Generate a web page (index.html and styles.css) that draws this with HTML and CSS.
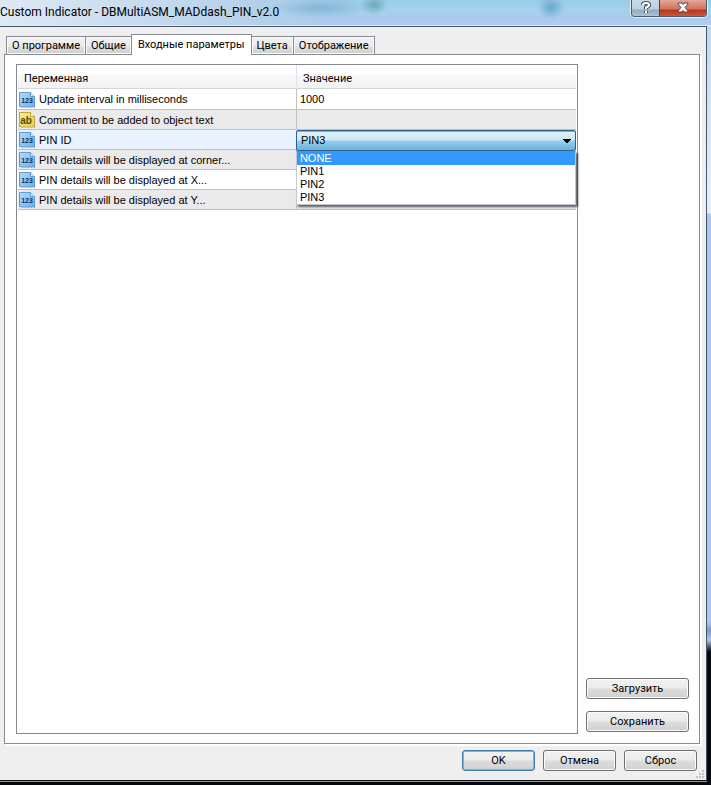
FILE: index.html
```html
<!DOCTYPE html>
<html lang="ru">
<head>
<meta charset="utf-8">
<title>Custom Indicator - DBMultiASM_MADdash_PIN_v2.0</title>
<link rel="stylesheet" href="styles.css">
</head>
<body>
<svg class="defs" aria-hidden="true">
  <defs>
    <linearGradient id="blue" x1="0" y1="0" x2="1" y2="1"><stop offset="0" stop-color="#b4d9f9"/><stop offset="1" stop-color="#6aaee8"/></linearGradient>
    <linearGradient id="gold" x1="0" y1="0" x2="1" y2="1"><stop offset="0" stop-color="#f6ec9c"/><stop offset="1" stop-color="#e2ce55"/></linearGradient>
    <symbol id="number" viewBox="0 0 16 16">
      <path d="M.5.5h11l4 4v11l-1.500-1-1.500 1-1.500-1-1.500 1-1.500-1-1.500 1-1.500-1-1.500 1-1.500-1-1.500 0z" fill="url(#blue)" stroke="#5f9bd0"/>
      <path d="M11.500.5v4h4" fill="#d8ecfc" stroke="#5f9bd0"/>
      <text class="glyph" x="8" y="11" fill="#0c3560" text-anchor="middle">123</text>
    </symbol>
    <symbol id="string" viewBox="0 0 16 16">
      <path d="M.5.5h11l4 4v11l-1.500-1-1.500 1-1.500-1-1.500 1-1.500-1-1.500 1-1.500-1-1.500 1-1.500-1-1.500 0z" fill="url(#gold)" stroke="#bda93a"/>
      <path d="M11.500.5v4h4" fill="#fbf6c8" stroke="#bda93a"/>
      <text class="glyph glyph-ab" x="7" y="12" fill="#5b4a05" text-anchor="middle">ab</text>
    </symbol>
  </defs>
</svg>
<div class="frame">
  <header class="titlebar">
    <h1>Custom Indicator - DBMultiASM_MADdash_PIN_v2.0</h1>
    <div class="caption">
      <button class="help" type="button" aria-label="Справка"><svg width="10" height="13" viewBox="0 0 10 13"><path d="M2 4V3.500Q2 2 5 2T8 4Q8 5.500 5 6.500V8.500M5 10v2" fill="none" stroke="#46505c" stroke-width="4"/><path d="M2 4V3.500Q2 2 5 2T8 4Q8 5.500 5 6.500V8.500M5 10v2" fill="none" stroke="#fff" stroke-width="2"/></svg></button>
      <button class="close" type="button" aria-label="Закрыть"><svg width="12" height="11" viewBox="0 0 12 11"><path d="M1 1h4l1 1.500 1-1.500h4v1L8 5.500l3 3.500v1H7L6 8.500 5 10H1V9l3-3.500L1 2z" fill="#fff" stroke="#57444c"/></svg></button>
    </div>
  </header>
  <main class="dialog">
    <nav class="tabs" role="tablist">
      <button role="tab" type="button">О программе</button>
      <button role="tab" type="button">Общие</button>
      <button role="tab" type="button" class="active" aria-selected="true">Входные параметры</button>
      <button role="tab" type="button">Цвета</button>
      <button role="tab" type="button">Отображение</button>
    </nav>
    <section class="panel" role="tabpanel">
      <div class="list">
        <table>
          <thead><tr><th>Переменная</th><th>Значение</th></tr></thead>
          <tbody>
            <tr><td><div class="name"><svg class="icon"><use href="#number"/></svg>Update interval in milliseconds</div></td><td>1000</td></tr>
            <tr><td><div class="name"><svg class="icon"><use href="#string"/></svg>Comment to be added to object text</div></td><td></td></tr>
            <tr class="selected"><td><div class="name"><svg class="icon"><use href="#number"/></svg><label for="pin">PIN ID</label></div></td>
              <td class="editing">
                <select id="pin"><option>NONE</option><option>PIN1</option><option>PIN2</option><option selected>PIN3</option></select>
                <ul class="options" role="listbox" aria-label="PIN ID">
                  <li role="option" class="hover">NONE</li><li role="option">PIN1</li><li role="option">PIN2</li><li role="option" aria-selected="true">PIN3</li>
                </ul>
              </td></tr>
            <tr><td><div class="name"><svg class="icon"><use href="#number"/></svg>PIN details will be displayed at corner...</div></td><td></td></tr>
            <tr><td><div class="name"><svg class="icon"><use href="#number"/></svg>PIN details will be displayed at X...</div></td><td></td></tr>
            <tr><td><div class="name"><svg class="icon"><use href="#number"/></svg>PIN details will be displayed at Y...</div></td><td></td></tr>
          </tbody>
        </table>
      </div>
      <div class="side">
        <button class="btn" type="button">Загрузить</button>
        <button class="btn" type="button">Сохранить</button>
      </div>
    </section>
    <footer class="actions">
      <button class="btn default" type="button">OK</button>
      <button class="btn" type="button">Отмена</button>
      <button class="btn" type="button">Сброс</button>
      <svg class="grip" width="8" height="8" viewBox="0 0 8 8"><path d="M6 0h2v2H6zM3 3h2v2H3zM6 3h2v2H6zM0 6h2v2H0zM3 6h2v2H3zM6 6h2v2H6z" fill="#c4c4c4"/></svg>
    </footer>
  </main>
</div>
</body>
</html>
```

FILE: styles.css
```css
* { box-sizing: border-box; }
body {
  margin: 0;
  font: 11px/13px "Liberation Sans", Arial, sans-serif;
  color: #000;
}
button, select { font: inherit; color: inherit; margin: 0; padding: 0; }
.defs { position: absolute; width: 0; height: 0; }
.glyph { font: bold 7px "Liberation Sans", Arial, sans-serif; }
.glyph-ab { font-size: 10px; }

.frame {
  display: flex;
  flex-direction: column;
  min-height: 100vh;
  padding: 0 4px 4px 0;
  background:
    linear-gradient(#8f9499, #8f9499) 0 calc(100% - 3px) / calc(100% - 4px) 1px no-repeat,
    linear-gradient(#b9d5ee 0, #e2eefa 190px, #e2eefa 213px, #a9caf0 214px, #a9caf0 622px, #7d9ab8 630px, #a5c8ee 640px, #05080f 652px, #05080f 100%);
}
.titlebar {
  display: flex;
  justify-content: space-between;
  align-items: flex-start;
  height: 26px;
  margin-right: -4px;
  padding-right: 4px;
  border-bottom: 1px solid #dcebfa;
  background:
    radial-gradient(ellipse 14px 10px at 374px 5px, #6da9b9, transparent),
    radial-gradient(ellipse 14px 12px at 551px 7px, #69a8cd, transparent),
    radial-gradient(ellipse 50px 10px at 320px 8px, #85b5d6, transparent),
    linear-gradient(90deg, #dfe9f4 0, #cddff0 100px, #b4d0e9 260px, transparent 340px),
    linear-gradient(#9bcbe8 0, #a4d3ec 10px, #a9c9ed 18px, #b2cdf0 25px);
}
.titlebar h1 {
  margin: 0;
  font: 12px/24px Roboto, "Segoe UI", sans-serif;
  white-space: nowrap;
}
.caption {
  display: flex;
  height: 17px;
  border: 1px solid #4b5b6c;
  border-top: 0;
  border-radius: 0 0 4px 4px;
  box-shadow: 0 0 0 1px #e4effa;
  overflow: hidden;
}
.caption button {
  display: flex;
  justify-content: center;
  border: 0;
  height: 16px;
  padding-top: 1px;
}
.help { width: 27px; background: linear-gradient(#c8dbe9 0, #bccfdd 9px, #91aabd 10px, #a9c3d6 100%); }
.caption .close { width: 47px; padding-top: 2px; border-left: 1px solid #6b3430; background: linear-gradient(#e2a798 0, #d27360 9px, #b8351c 10px, #cf5636 100%); }

.dialog {
  flex: 1;
  display: flex;
  flex-direction: column;
  padding: 7px 4px 0;
  border: 1px solid #45556a;
  border-left: 0;
  border-bottom-color: #111;
  background: #efefef;
}
.tabs {
  display: flex;
  align-items: flex-end;
  padding-left: 2px;
  margin-bottom: -1px;
  z-index: 1;
}
.tabs button, .btn, th { font-family: Roboto, Tahoma, sans-serif; }
.tabs button {
  height: 19px;
  padding: 0 5px;
  border: 1px solid #898c95;
  border-right-width: 0;
  background: linear-gradient(#f2f2f2 0, #ebebeb 9px, #dddddd 10px, #cfcfcf 100%);
  box-shadow: inset 0 0 0 1px #fafafa;
}
.tabs button:last-child { border-right-width: 1px; }
.tabs .active {
  height: 21px;
  padding: 0 6px 2px;
  border-right-width: 1px;
  border-bottom: 0;
  background: #fff;
  box-shadow: none;
}
.tabs .active + button { border-left-width: 0; }
.panel {
  flex: 1;
  display: flex;
  gap: 8px;
  margin-right: 2px;
  padding: 9px 10px 9px 11px;
  border: 1px solid #898c95;
  background: #fff;
  box-shadow: 2px 2px 0 #fff;
}
.list {
  flex: 1;
  padding: 0 1px;
  border: 1px solid #828790;
}
.side {
  display: flex;
  flex-direction: column;
  justify-content: flex-end;
  gap: 12px;
  width: 103px;
  padding-bottom: 2px;
}
table { width: 100%; border-collapse: separate; border-spacing: 0; table-layout: fixed; }
th, td { padding: 0; text-align: left; font-weight: normal; }
th:first-child { width: 49.8%; }
th {
  height: 24px;
  padding: 4px 6px 0;
  border-bottom: 1px solid #d5d5d5;
  background: linear-gradient(#fff 0, #fff 9px, #f7f8fa 10px, #f1f2f4 100%);
}
th + th { border-left: 1px solid #dfe3e8; }
td { height: 20px; padding-top: 1px; border-bottom: 1px solid #c0c0c0; }
tbody tr:first-child td { height: 21px; }
td + td { padding-left: 3px; border-left: 1px solid #c0c0c0; }
tbody tr:nth-child(even) td { background: #eaeaea; }
tbody .selected td { background: #e8f3ff; }
.name { display: flex; align-items: center; gap: 4px; padding-left: 1px; }
.icon { width: 16px; height: 16px; flex: none; }

td.editing { position: relative; padding: 0; border-left: 0; }
select {
  display: block;
  appearance: none;
  width: 100%;
  height: 21px;
  margin-bottom: -2px;
  padding: 0 4px;
  border: 1px solid #2c628b;
  border-radius: 2px;
  background:
    conic-gradient(from -45deg at 50% 100%, #000 90deg, transparent 0) right 4px top 8px / 8px 4px no-repeat,
    linear-gradient(#e4f2fb 0, #cbe8f8 9px, #98cfec 10px, #68b0d8 100%);
  box-shadow: inset 0 1px 0 #8aa9be;
  outline: 0;
}
.options {
  position: absolute;
  top: 21px;
  left: 0;
  right: 0;
  z-index: 2;
  margin: 0;
  padding: 0;
  list-style: none;
  border: 1px solid #c3c7d5;
  border-top-color: #828790;
  background: #fff;
  box-shadow: 2px 2px 2px rgba(0, 0, 0, .6);
}
.options li { padding-left: 3px; }
.options .hover { background: #3399ff; color: #fff; }

.btn {
  height: 21px;
  border: 1px solid #707070;
  border-radius: 3px;
  background: linear-gradient(#f2f2f2 0, #ebebeb 9px, #dddddd 10px, #cfcfcf 100%);
  box-shadow: inset 0 0 0 1px #fbfbfb;
}
.default { border-color: #3c7fb1; box-shadow: inset 0 0 0 1px #48c8f4; }
.actions {
  position: relative;
  display: flex;
  justify-content: flex-end;
  gap: 8px;
  padding: 6px 5px 9px 0;
}
.actions .btn { width: 73px; }
.grip { position: absolute; right: -2px; bottom: 2px; }
```
